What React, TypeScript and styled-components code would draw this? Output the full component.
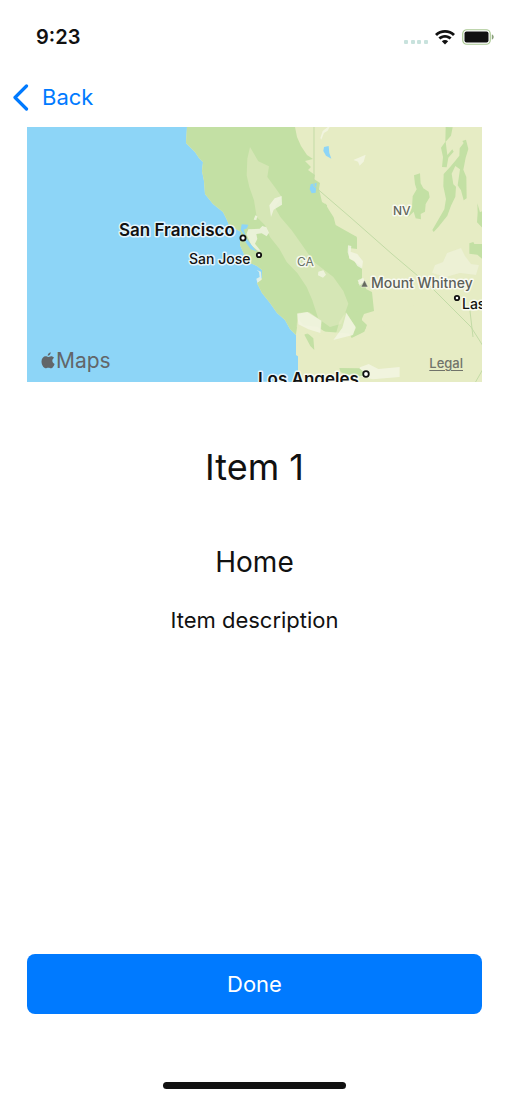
import React from "react";
import styled, { createGlobalStyle } from "styled-components";

const GlobalStyle = createGlobalStyle`
  *, *::before, *::after { box-sizing: border-box; }
  body {
    margin: 0;
    background: #fff;
    color: #111;
    font-family: Inter, "Liberation Sans", sans-serif;
  }
`;

const Screen = styled.div`
  min-height: 100vh;
  display: flex;
  flex-direction: column;
`;

const StatusBar = styled.header`
  display: flex;
  align-items: center;
  justify-content: space-between;
  height: 74px;
  padding: 0 15px 0 36px;
`;

const Clock = styled.time`
  font-size: 20px;
  line-height: 24px;
  font-weight: 600;
`;

const StatusIcons = styled.div`
  display: flex;
  align-items: center;
  gap: 7px;
`;

const NavBar = styled.nav`
  display: flex;
  align-items: center;
  height: 46px;
  padding: 0 12px;
`;

const BackButton = styled.button`
  display: flex;
  align-items: center;
  gap: 13px;
  padding: 0;
  border: 0;
  background: none;
  color: #007aff;
  font: inherit;
  font-size: 22px;
  line-height: 28px;
  cursor: pointer;
`;

const Content = styled.main`
  flex: 1;
  display: flex;
  flex-direction: column;
  padding: 7px 27px 0;
`;

const MapFrame = styled.section`
  position: relative;
  height: 255px;
  overflow: hidden;
  background: #8dd5f7;
`;

const MapDrawing = styled.svg`
  display: block;
  width: 100%;
  height: 100%;
`;

const MapLabel = styled.text<{ $size: number; $weight?: number; $tone?: string }>`
  font-size: ${(p) => p.$size}px;
  font-weight: ${(p) => p.$weight ?? 600};
  fill: ${(p) => p.$tone ?? "#111"};
  stroke: rgba(255, 255, 255, 0.75);
  stroke-width: 3px;
  stroke-linejoin: round;
  paint-order: stroke;
`;

const MapsBrand = styled.div`
  position: absolute;
  left: 14px;
  bottom: 9px;
  display: flex;
  align-items: center;
  gap: 1px;
  color: #626669;
  font-size: 21px;
  line-height: 24px;
`;

const LegalLink = styled.a`
  position: absolute;
  right: 19px;
  bottom: 11px;
  color: #70736a;
  font-size: 13px;
  line-height: 16px;
  font-weight: 500;
  text-underline-offset: 2px;
`;

const Details = styled.section`
  display: flex;
  flex-direction: column;
  align-items: center;
  padding-top: 61px;
  text-align: center;
`;

const Title = styled.h1`
  margin: 0;
  font-size: 36px;
  line-height: 48px;
  font-weight: 400;
`;

const Subtitle = styled.h2`
  margin: 53px 0 0;
  font-size: 28px;
  line-height: 36px;
  font-weight: 400;
`;

const Description = styled.p`
  margin: 26px 0 0;
  font-size: 22px;
  line-height: 28px;
`;

const DoneButton = styled.button`
  width: 100%;
  height: 60px;
  margin-top: auto;
  border: 0;
  border-radius: 8px;
  background: #007aff;
  color: #fff;
  font: inherit;
  font-size: 22px;
  line-height: 28px;
  cursor: pointer;
`;

const Footer = styled.footer`
  display: flex;
  justify-content: center;
  padding: 68px 0 11px;
`;

const HomeIndicator = styled.div`
  width: 36%;
  height: 7px;
  border-radius: 4px;
  background: #111;
`;

const SignalDots = () => (
  <svg width="24" height="15" viewBox="0 0 24 15" aria-hidden="true">
    {[0, 7, 13, 20].map((x) => (
      <rect key={x} x={x} y="10" width="4" height="4" rx="1" fill="#c8e2dd" />
    ))}
  </svg>
);

const WifiIcon = () => (
  <svg width="20" height="15" viewBox="0 0 20 15" aria-hidden="true">
    <path d="M10 0C6.200 0 2.700 1.400 0 3.900L2 5.900C4.200 3.900 7 2.800 10 2.800s5.800 1.100 8 3.100l2-2C17.300 1.400 13.800 0 10 0Z" fill="#111" />
    <path d="M10 5C7.500 5 5.200 5.900 3.400 7.500l2 2C6.700 8.400 8.300 7.800 10 7.800s3.300.6 4.600 1.700l2-2C14.800 5.900 12.500 5 10 5Z" fill="#111" />
    <path d="M10 10c-1.200 0-2.300.4-3.200 1.200L10 14.600l3.200-3.400C12.300 10.400 11.200 10 10 10Z" fill="#111" />
  </svg>
);

const BatteryIcon = () => (
  <svg width="32" height="16" viewBox="0 0 32 16" aria-hidden="true">
    <rect x=".75" y=".75" width="27.500" height="14.500" rx="4" fill="#fff" stroke="#a9c792" strokeWidth="1.200" />
    <rect x="2.500" y="2.500" width="24" height="11" rx="2" fill="#111" />
    <path d="M29.800 5.500c1.400.3 1.900 1.400 1.900 2.500s-.5 2.200-1.900 2.500Z" fill="#8ba17c" />
  </svg>
);

const ChevronIcon = () => (
  <svg width="17" height="27" viewBox="0 0 17 27" fill="none" aria-hidden="true">
    <path d="M14.500 2 3 13.500 14.500 25" stroke="currentColor" strokeWidth="3.200" strokeLinecap="round" strokeLinejoin="round" />
  </svg>
);

const AppleLogo = () => (
  <svg width="14" height="18" viewBox="0 0 14 18" fill="currentColor" aria-hidden="true">
    <path d="M9.700.3c.2 1.700-1.400 3.500-3 3.500C6.500 2.100 8.100.5 9.700.3Z" />
    <path d="M7.100 5c.8 0 1.700-.8 3-.8 1.200 0 2.300.6 3 1.600-2.600 1.500-2.200 5 .5 6.100-.6 1.800-2 4.400-3.500 4.400-1 0-1.500-.6-2.800-.6s-1.800.6-2.700.6C2.600 16.300.5 12.900.5 9.600c0-3.400 2.100-5.300 4.100-5.300 1.100 0 1.900.7 2.500.7Z" />
  </svg>
);

const land = "#e6ecc4";
const forest = "#c3e0a4";
const water = "#8dd5f7";
const valley = "#d5e6b5";
const urban = "#f4f6e5";

const Terrain = () => (
  <>
    <path
      fill={land}
      d="M160 0 159 16 168 25 172 31 176 35 175 44 177 54 178 67 186 77 196 85 200 93 202 98 207 101 214 105 213 118 217 127 216 132 223 136 230 139 235 143 235 151 230 156 235 166 243 176 250 186 258 193 263 202 269 208 269 228 275 232 298 233 306 239 314 248 331 251 334 256H456V0Z"
    />
    <path
      fill={forest}
      d="M160 0 159 16 168 25 172 31 176 35 175 44 177 54 178 67 186 77 196 85 200 93 202 98 207 101 214 105 213 118 217 127 216 132 223 136 230 139 235 143 235 151 230 156 235 166 243 176 250 186 258 193 263 202 269 208 276 211 281 216 285 223 286 217 278 205 290 204 329 207 327 209 334 206 339 201 338 197 334 194 337 187 347 184 345 165 339 162 338 155 331 157 335 151 335 140 322 131 322 121 330 122 330 111 325 108 320 111 312 107 306 108 311 100 303 98 306 90 300 88 300 78 295 75 292 62 293 56 287 52 288 48 281 43 284 40 278 34 286 32 280 28 274 19 270 10 268 0Z"
    />

    {/* Central valley and surrounding lowlands */}
    <g transform="translate(203 0) scale(.33333)">
      <path fill={valley} d="M60 60 52 95 50 145 58 180 72 220 80 270 105 295 120 330 148 365 170 405 202 438 230 480 247 520 265 575 300 600 334 590 355 530 340 492 310 450 252 405 210 345 185 310 151 270 134 240 155 210 138 185 112 150 117 118 85 103Z" />
      <path fill={land} d="m205 575 15 20 42 4 38 25 90-2-12 25 40-5 88-88 50-22v257H204V680l-6-58Z" />
      <path fill={forest} d="m232 618 18 16 3 35-12-12-18-34ZM338 588l30-32 25-4 3 28 15 14-8 20-38 19Z" />
      <path fill={land} opacity=".6" d="m202 558 35-3 38 26-3 44-58-5-14-20ZM348 555l30 49-16 25-52 18 18-63Z" />
      <g fill={urban} opacity=".8">
        <path d="m155 207 1 26-25 15-8 22-5-35 16-21ZM55 307l34-2 8-8 12 4 8 16-7 11-15-9-16 2 3 15-7 14 19 24-9-1-21-18-15-33ZM76 265l6 3-3 11-8-1ZM265 434l15-4 8 13-9 9-15-7ZM80 429l13 5 2 24-13 9-3-12 10-5-2-15Z" />
        <path d="m202 560 30-5 42 26-3 37-36-11-30-15ZM349 558l28 42-8 24-59 15 27-37ZM354 355l10 2-2 17 20 7 17 22-3 22-14-8-9-15-14-6-6-20ZM383 460l17-8 5 12-16 12Z" />
        <path d="m370 99 37-16-6 21-12 12-5-12ZM299 0l-6 11-11 7-8 20-3-5 7-21 15-12ZM390 721l26-10 29 15 64-6v30l-80 7-52-10Z" />
      </g>
      <path fill={water} d="m35 292 20 1-4 11-10 4 8 26 24 31 7 8-18-6-16-23-2-18-12-17ZM282 60l14-3 2 21 6 17-16-9-8-14ZM242 172l18-5-3 30-12 2-6-12Z" />
      <path fill={forest} d="m328 723 60 1 24 20-38 7-42-15Z" />
    </g>

    {/* Pale desert basin near the Nevada border */}
    <path fill={urban} opacity=".5" d="m420 126 14-5 4 8 6 8 8 1-3 10-16-2-14 4-14-4 3-8 8-3Z" />

    {/* Nevada ranges */}
    <g transform="translate(298 -7) scale(.33333)" fill={forest}>
      <path d="m362 21 21 1-5 25-16 18 5 40 15-17 4 7-16 18-5 29-14-1 3-30-6-28 13-18Z" />
      <path d="m412 63 11-4 7 28-8 26-7 36 9 22 1 64-9 6-8-30-10-15 7-48-14-10-11 23 5 32 8 7-2 30-13 27-11 30-27 34-14 15-4-6 36-62 5-31-8-38 1-37 20-22 15-18 12-15 1-22 12-16Z" />
      <path d="m267 166 18-6 2 30 8 15 16 10 3 17-12 20-2 23-13 7 1 16-16-3-6-20-17 17 12-29 2-34 12-21-5-15Z" />
      <path d="m457 250 8 27 10-5v55l-19-20 2-30ZM433 370l12-4 3 6h27v48l-18-16-24-3Z" />
      <path d="M0 250 12 270 26 292 32 315 65 334 96 351 86 378 46 366 0 405Z" />
    </g>
    <path d="M287 0v59l36 31 42 37 39 33 40 40 12 19M443 184l3 26m10 32-8 14" fill="none" stroke="#c3dba6" strokeWidth="1" />
  </>
);

const CityDot = ({ x, y, r }: { x: number; y: number; r: number }) => (
  <circle cx={x} cy={y} r={r} fill="#fff" stroke="#111" strokeWidth="1.800" />
);

export default function App() {
  return (
    <>
      <GlobalStyle />
      <Screen>
        <StatusBar>
          <Clock>9:23</Clock>
          <StatusIcons>
            <SignalDots />
            <WifiIcon />
            <BatteryIcon />
          </StatusIcons>
        </StatusBar>
        <NavBar>
          <BackButton type="button">
            <ChevronIcon />
            Back
          </BackButton>
        </NavBar>
        <Content>
          <MapFrame aria-label="Map of California">
            <MapDrawing viewBox="0 0 455 255" preserveAspectRatio="xMidYMid slice">
              <Terrain />
              <MapLabel x="92" y="109" $size={17}>San Francisco</MapLabel>
              <CityDot x={216} y={111} r={2.6} />
              <MapLabel x="162" y="137" $size={14} $weight={500}>San Jose</MapLabel>
              <CityDot x={232} y={128} r={2.2} />
              <MapLabel x="231" y="258" $size={17}>Los Angeles</MapLabel>
              <CityDot x={339} y={247} r={2.8} />
              <MapLabel x="435" y="182" $size={14} $weight={500}>Las</MapLabel>
              <CityDot x={430} y={171} r={2.2} />
              <MapLabel x="270" y="139" $size={12} $weight={400} $tone="#667064">CA</MapLabel>
              <MapLabel x="366" y="88" $size={12} $weight={500} $tone="#62665b">NV</MapLabel>
              <path d="m334 160 3.500-7 3.500 7Z" fill="#666a60" stroke="#f4f6e5" strokeWidth=".5" />
              <MapLabel x="344" y="161" $size={14} $weight={500} $tone="#5c6059">Mount Whitney</MapLabel>
            </MapDrawing>
            <MapsBrand>
              <AppleLogo />
              Maps
            </MapsBrand>
            <LegalLink href="#legal">Legal</LegalLink>
          </MapFrame>
          <Details>
            <Title>Item 1</Title>
            <Subtitle>Home</Subtitle>
            <Description>Item description</Description>
          </Details>
          <DoneButton type="button">Done</DoneButton>
        </Content>
        <Footer>
          <HomeIndicator />
        </Footer>
      </Screen>
    </>
  );
}
